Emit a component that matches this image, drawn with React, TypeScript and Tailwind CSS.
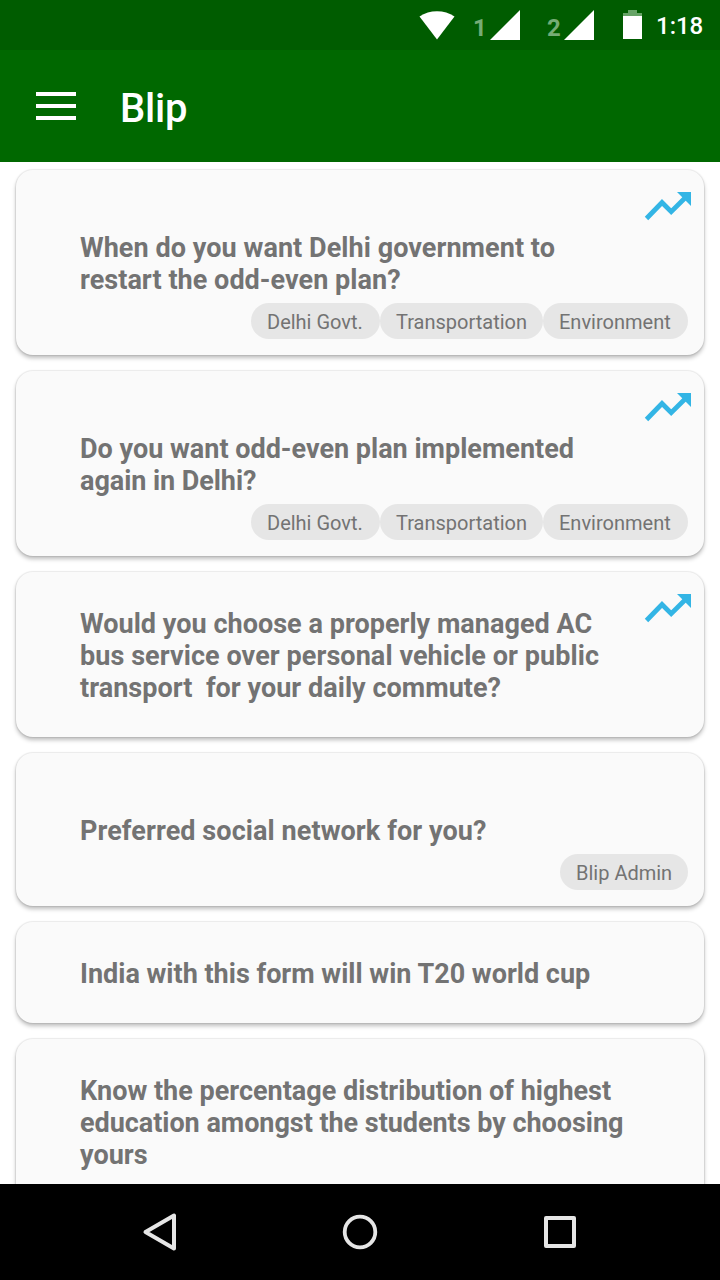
type Line = { text: string; tracking?: string };
type Poll = { lines: Line[]; tags?: string[]; trending?: boolean };

const polls: Poll[] = [
  {
    lines: [
      { text: 'When do you want Delhi government to', tracking: 'tracking-[0.06px]' },
      { text: 'restart the odd-even plan?', tracking: 'tracking-[0.04px]' },
    ],
    tags: ['Delhi Govt.', 'Transportation', 'Environment'],
    trending: true,
  },
  {
    lines: [
      { text: 'Do you want odd-even plan implemented' },
      { text: 'again in Delhi?', tracking: 'tracking-[-0.06px]' },
    ],
    tags: ['Delhi Govt.', 'Transportation', 'Environment'],
    trending: true,
  },
  {
    lines: [
      { text: 'Would you choose a properly managed AC', tracking: 'tracking-[0.03px]' },
      { text: 'bus service over personal vehicle or public', tracking: 'tracking-[0.07px]' },
      { text: 'transport  for your daily commute?', tracking: 'tracking-[0.03px]' },
    ],
    trending: true,
  },
  {
    lines: [{ text: 'Preferred social network for you?', tracking: 'tracking-[0.08px]' }],
    tags: ['Blip Admin'],
  },
  { lines: [{ text: 'India with this form will win T20 world cup' }] },
  {
    lines: [
      { text: 'Know the percentage distribution of highest' },
      { text: 'education amongst the students by choosing', tracking: 'tracking-[-0.04px]' },
      { text: 'yours' },
    ],
  },
];

const tagWidths: Record<string, string> = {
  'Delhi Govt.': 'w-[129px]',
  Transportation: 'w-[163px]',
  Environment: 'w-[145px]',
  'Blip Admin': 'w-[128px]',
};

function SignalIcon() {
  return (
    <svg width="30" height="30" viewBox="0 0 30 30" fill="#fff">
      <path d="M30 0V30H0Z" />
    </svg>
  );
}

function StatusBar() {
  return (
    <div className="flex h-[50px] shrink-0 items-start justify-end bg-[#005c00] pr-4 pt-[10px] text-white">
      <svg className="mr-[18px] mt-px" width="36" height="29" viewBox="0 0 36 29" fill="#fff">
        <path d="M.5 5.5C10.500-1.500 25.500-1.500 35.500 5.500L18 28.500Z" />
      </svg>
      <span className="w-[17px] pt-[3px] text-2xl font-bold leading-[30px] text-[#76ac76]">1</span>
      <SignalIcon />
      <span className="ml-[27px] w-[17px] pt-[3px] text-2xl font-bold leading-[30px] text-[#76ac76]">2</span>
      <SignalIcon />
      <svg className="ml-[29px]" width="19" height="29" viewBox="0 0 19 29">
        <path d="M5 0H14V3H19V6H0V3H5Z" fill="#66a366" />
        <path d="M0 6H19V29H0Z" fill="#fff" />
      </svg>
      <span className="ml-[14px] w-[48px] whitespace-nowrap text-2xl font-medium leading-[32px]">1:18</span>
    </div>
  );
}

function TrendingIcon() {
  return (
    <svg className="absolute right-[12px] top-[21px]" width="48" height="30" viewBox="0 0 48 30">
      <path d="M2.500 27.500L18 11.500L27.200 20.700L42 6" fill="none" stroke="#33b5e5" strokeWidth="4.800" />
      <path d="M33 1H47V15Z" fill="#33b5e5" />
    </svg>
  );
}

function PollCard({ poll }: { poll: Poll }) {
  return (
    <article
      className={`relative shrink-0 rounded-[17px] bg-[#fafafa] pl-16 pr-4 shadow-[0_0_1px_1px_rgba(0,0,0,0.07),0_3px_4px_0_rgba(0,0,0,0.26)] ${
        poll.tags ? 'pb-4 pt-[62px]' : 'pb-[33px] pt-9'
      }`}
    >
      {poll.trending && <TrendingIcon />}
      <h2 className="text-[27px] font-bold leading-8 text-[#737373]">
        {poll.lines.map((line) => (
          <span key={line.text} className={`block whitespace-pre ${line.tracking ?? ''}`}>
            {line.text}
          </span>
        ))}
      </h2>
      {poll.tags && (
        <div className="mt-[7px] flex justify-end">
          {poll.tags.map((tag) => (
            <span
              key={tag}
              className={`h-9 whitespace-nowrap rounded-full bg-[#e6e6e6] pl-4 text-xl leading-[38px] text-[#737373] ${tagWidths[tag]}`}
            >
              {tag}
            </span>
          ))}
        </div>
      )}
    </article>
  );
}

export default function App() {
  return (
    <div className="flex h-[1280px] w-[720px] flex-col overflow-hidden bg-white font-['Roboto',sans-serif]">
      <StatusBar />
      <header className="flex h-28 shrink-0 items-center bg-[#006800] pl-9 text-white">
        <div className="flex w-10 flex-col gap-2">
          <div className="h-1 bg-white" />
          <div className="h-1 bg-white" />
          <div className="h-1 bg-white" />
        </div>
        <h1 className="ml-11 mt-[5px] text-[40px] font-medium leading-none tracking-[-0.2px]">Blip</h1>
      </header>
      <main className="flex min-h-0 flex-1 flex-col gap-4 overflow-hidden px-4 pt-2">
        {polls.map((poll) => (
          <PollCard key={poll.lines[0].text} poll={poll} />
        ))}
      </main>
      <nav className="flex h-24 shrink-0 items-center justify-center gap-40 bg-black">
        <svg width="40" height="40" viewBox="0 0 40 40" fill="none" stroke="#e6e6e6" strokeWidth="4" strokeLinejoin="round">
          <path d="M5.500 20L34 3.500V36.500Z" />
        </svg>
        <svg width="40" height="40" viewBox="0 0 40 40" fill="none" stroke="#e6e6e6" strokeWidth="3.800">
          <circle cx="20" cy="20" r="15.300" />
        </svg>
        <svg width="40" height="40" viewBox="0 0 40 40" fill="none" stroke="#e6e6e6" strokeWidth="4" strokeLinejoin="round">
          <path d="M6 6H34V34H6Z" />
        </svg>
      </nav>
    </div>
  );
}
